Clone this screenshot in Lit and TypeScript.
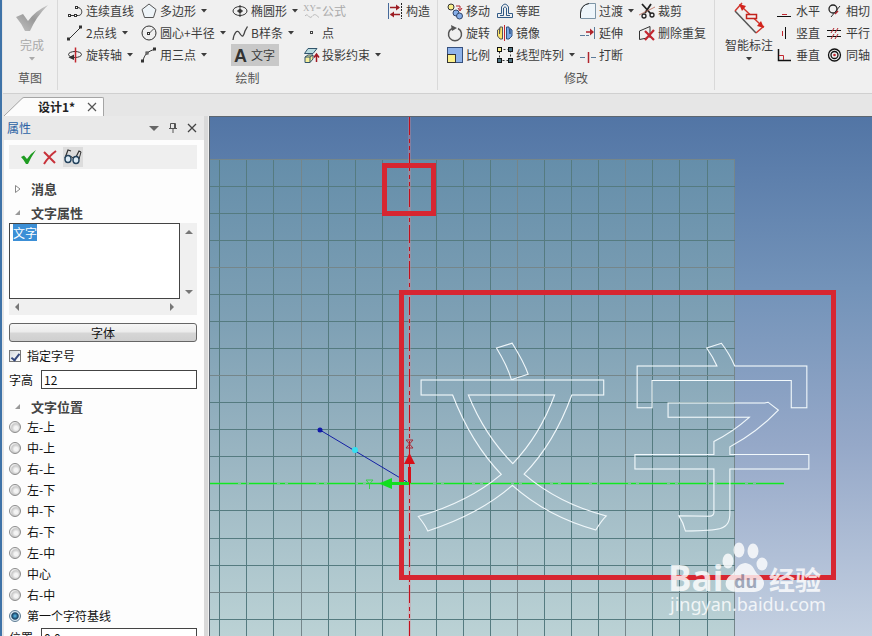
import { LitElement, html, css, svg, nothing } from "lit";
import { customElement, query, state } from "lit/decorators.js";
import { classMap } from "lit/directives/class-map.js";

const FONT = css`"Noto Sans CJK SC", "Noto Sans", sans-serif`;

const handle = (x: number, y: number) =>
  svg`<rect x="${x}" y="${y}" width="2" height="2" fill="#fff" stroke="#333" stroke-width="1"/>`;

const icons: Record<string, unknown> = {
  polyline: svg`<path d="M3.500 12.500H11.500C16 12.500 16 4.500 10.500 4.500H9" fill="none" stroke="#333"/>
    ${handle(1.5, 11.5)}${handle(7.5, 11.5)}${handle(8.5, 3.5)}`,
  line: svg`<path d="M2.500 13.500L13.500 2.500" stroke="#333"/>${handle(0.5, 13)}${handle(12.5, 1)}`,
  axis: svg`<ellipse cx="8" cy="7.500" rx="6.500" ry="3" fill="none" stroke="#333"/>
    <path d="M8.500 0.500V15.500" stroke="#c3272f" stroke-width="1.500"/><path d="M7 7.500L1.500 10.500L7 13Z" fill="#333"/>`,
  polygon: svg`<path d="M8 1L15 6.500L12.500 14.500H3.500L1 6.500Z" fill="#eef4f8" stroke="#555"/>`,
  circle: svg`<circle cx="8" cy="8" r="7" fill="none" stroke="#333"/>
    <path d="M8 8.500L12.500 4" stroke="#555"/>${handle(6.5, 7.5)}`,
  arc: svg`<path d="M2 14C3 8 7 4 13.500 2.500" fill="none" stroke="#333"/>
    ${handle(0.5, 13)}${handle(5, 5)}${handle(12.5, 1)}`,
  ellipse: svg`<ellipse cx="8" cy="8" rx="7" ry="4.500" fill="none" stroke="#333"/>
    <path d="M8 2V14M5 8H11" stroke="#333"/><circle cx="8" cy="8" r="2" fill="#333"/>`,
  spline: svg`<path d="M1 15C2 8 5 4 7.500 8S11 13 13 6L15.500 1.500" fill="none" stroke="#444" stroke-width="1.300"/>`,
  text: svg`<text class="letter" x="2" y="15">A</text>`,
  formula: svg`<text class="xy" x="0" y="8">XY=</text>
    <path d="M2 13C5 9 6 17 9 13.500S13 12 16 14.500" fill="none" stroke="#bbb"/>`,
  point: svg`<rect x="7.500" y="6.500" width="2" height="2" fill="#fff" stroke="#444"/>`,
  project: svg`<path d="M5 1.500H14L10 6.500H1.500Z" fill="#b9dbe0" stroke="#31546b"/>
    <path d="M2 10L5 8H10V12L7 15.500H2Z" fill="#f7ef9a" stroke="#31546b"/><path d="M2 10H7V15.500M7 10L10 8" fill="none" stroke="#31546b"/>
    <path d="M13.500 15V8M11 10.500L13.500 7L16 10.500" fill="none" stroke="#a01822" stroke-width="1.500"/>`,
  construct: svg`<path d="M1.500 0V16" stroke="#45699a"/><path d="M14.500 0V16" stroke="#222" stroke-dasharray="2 1"/>
    <path d="M3 4.500H12M3.500 11.500H13" stroke="#9c1c22" stroke-width="1.500"/>
    <path d="M9 1.500L13 4.500L9 7.500ZM7 8.500L3 11.500L7 14.500Z" fill="#9c1c22"/>`,
  move: svg`<circle cx="4" cy="4" r="3" fill="#fbf08b" stroke="#333"/><circle cx="9" cy="10" r="3" fill="#86aee8" stroke="#31466b"/>
    <circle cx="12.500" cy="13" r="3" fill="#86aee8" stroke="#31466b"/><path d="M9 3H13V7M11 5L13 8L15 5" fill="none" stroke="#b3262c"/>`,
  rotate: svg`<path d="M5 3.500A6.500 6.500 0 1 0 11 3.500" fill="none" stroke="#555" stroke-width="1.500"/><path d="M4 0L10 3L5 6Z" fill="#555"/>`,
  scale: svg`<rect x="0.500" y="0.500" width="15" height="15" fill="#8fb3ea" stroke="#35507e"/><rect x="0.500" y="7.500" width="8" height="8" fill="#fbf08b" stroke="#333"/>`,
  offset: svg`<path d="M0.500 14.500V10.500H4.500V4Q8 -2 11.500 4V10.500H15.500V14.500ZM3 12.500H6.500V5Q8 2.500 9.500 5V12.500H13" fill="none" stroke="#315a86"/>`,
  mirror: svg`<path d="M7.500 0V16" stroke="#c3272f"/><path d="M0.500 5L2.500 3.500V9L3 2H5.500V14H3L0.500 11Z" fill="#fbe46c" stroke="#555"/>
    <path d="M15 5L13 3.500V9L12 2H9.500V14H12L15 11Z" fill="#78a7e6" stroke="#31507e"/>`,
  pattern: svg`<path d="M2.500 2.500H13.500V13.500H2.500Z" fill="none" stroke="#333" stroke-dasharray="2 2"/>
    <rect x="0.500" y="0.500" width="4" height="4" fill="#fbf08b" stroke="#111"/>
    <g fill="#4f7583" stroke="#111"><rect x="11.500" y="0.500" width="4" height="4"/><rect x="0.500" y="11.500" width="4" height="4"/><rect x="11.500" y="11.500" width="4" height="4"/></g>`,
  fillet: svg`<path d="M1 15.500V9Q2 2 9 0.500H15.500V15.500Z" fill="#eef5fa"/><path d="M0.500 15.500V10Q1 2 9 0.500H15.500V15.500H1" fill="none" stroke="#7d95a6"/>
    <path d="M0.500 15V10Q1 2 9 0.500" fill="none" stroke="#333"/>`,
  extend: svg`<path d="M0 10.500H5M6 10.500H9" stroke="#5b7b9a"/><path d="M14.500 2V14" stroke="#5b7b9a"/>
    <path d="M6 7H12" stroke="#b0242c" stroke-width="1.500"/><path d="M10 3.500L14 7L10 10.500Z" fill="#b0242c"/>`,
  break: svg`<path d="M0 10.500H5M11 10.500H16" stroke="#5b7b9a"/><path d="M8.500 5V16" stroke="#b0242c" stroke-width="1.500"/>`,
  trim: svg`<path d="M3 1L12 11M12 1L6 10" stroke="#222" stroke-width="1.800"/><path d="M0 12L16 4" stroke="#b86452" stroke-width="0.800"/>
    <circle cx="5" cy="13" r="2" fill="none" stroke="#222" stroke-width="1.300"/><circle cx="13" cy="12" r="2" fill="none" stroke="#222" stroke-width="1.300"/>`,
  dedupe: svg`<path d="M0.500 14.500V6L11 1.500V13M0.500 14.500L8 13" fill="none" stroke="#333"/><path d="M6 6L15 15M15 5L6 15" stroke="#c22730" stroke-width="2.200"/>`,
  horizontal: svg`<path d="M0 13.500H14" stroke="#111"/><path d="M5 11.500H10" stroke="#c3272f"/>`,
  vertical: svg`<path d="M8.500 2V14" stroke="#111"/><path d="M5.500 6V11" stroke="#c3272f"/>`,
  perpendicular: svg`<path d="M1.500 2V13.500H14" fill="none" stroke="#111" stroke-width="1.500"/><path d="M2 8.500H6.500V13" fill="none" stroke="#c3272f"/>`,
  tangent: svg`<circle cx="6" cy="6" r="4" fill="none" stroke="#222" stroke-width="1.300"/><path d="M4 14L13 3" stroke="#333"/><path d="M8 11L11 8" stroke="#b0242c" stroke-width="1.500"/>`,
  parallel: svg`<path d="M0 5.500H14M0 11.500H14" stroke="#111"/><path d="M4 8L7 3M8 8L11 3M4 14L7 9M8 14L11 9" stroke="#b0242c"/>`,
  concentric: svg`<circle cx="7.500" cy="8" r="6" fill="none" stroke="#111" stroke-width="1.300"/><circle cx="7.500" cy="8" r="3.500" fill="none" stroke="#111" stroke-width="1.300"/><circle cx="7.500" cy="8" r="1.300" fill="#c3272f"/>`,
};

interface Command {
  icon: string;
  label: string;
  menu?: boolean;
  disabled?: boolean;
  active?: boolean;
}

const drawColumns: Command[][] = [
  [
    { icon: "polyline", label: "连续直线" },
    { icon: "line", label: "2点线", menu: true },
    { icon: "axis", label: "旋转轴", menu: true },
  ],
  [
    { icon: "polygon", label: "多边形", menu: true },
    { icon: "circle", label: "圆心+半径", menu: true },
    { icon: "arc", label: "用三点", menu: true },
  ],
  [
    { icon: "ellipse", label: "椭圆形", menu: true },
    { icon: "spline", label: "B样条", menu: true },
    { icon: "text", label: "文字", active: true },
  ],
  [
    { icon: "formula", label: "公式", disabled: true },
    { icon: "point", label: "点" },
    { icon: "project", label: "投影约束", menu: true },
  ],
  [{ icon: "construct", label: "构造" }],
];

const modifyColumns: Command[][] = [
  [
    { icon: "move", label: "移动" },
    { icon: "rotate", label: "旋转" },
    { icon: "scale", label: "比例" },
  ],
  [
    { icon: "offset", label: "等距" },
    { icon: "mirror", label: "镜像" },
    { icon: "pattern", label: "线型阵列", menu: true },
  ],
  [
    { icon: "fillet", label: "过渡", menu: true },
    { icon: "extend", label: "延伸" },
    { icon: "break", label: "打断" },
  ],
  [
    { icon: "trim", label: "裁剪" },
    { icon: "dedupe", label: "删除重复" },
  ],
];

const constraintColumns: Command[][] = [
  [
    { icon: "horizontal", label: "水平" },
    { icon: "vertical", label: "竖直" },
    { icon: "perpendicular", label: "垂直" },
  ],
  [
    { icon: "tangent", label: "相切" },
    { icon: "parallel", label: "平行" },
    { icon: "concentric", label: "同轴" },
  ],
];

const caret = html`<svg class="caret" width="6" height="4" viewBox="0 0 6 4" aria-hidden="true"><path d="M0 0H6L3 3.500Z" fill="currentColor"/></svg>`;

@customElement("cad-ribbon")
class CadRibbon extends LitElement {
  static styles = css`
    :host { display: block; }
    .ribbon { display: flex; height: 93px; background: #f0f0f0; border-bottom: 1px solid #d0d0d0; overflow: hidden; }
    .group { display: flex; flex-direction: column; flex: none; border-right: 1px solid #d9d9d9; margin-bottom: 3px; }
    .group.last { flex: 1; border-right: 0; }
    .tools { display: grid; height: 69px; padding-left: 8px; }
    .sketch { width: 54px; }
    .sketch .tools { display: flex; justify-content: center; padding-left: 4px; }
    .draw { width: 379px; }
    .draw .tools { grid-template-columns: 74px 91px 71px 84px 50px; }
    .modify { width: 276px; }
    .modify .tools { grid-template-columns: 50px 83px 59px 74px; }
    .last .tools { grid-template-columns: 54px 50px 50px; padding-left: 7px; }
    .caption { text-align: center; line-height: 24px; color: #555; }
    .col { display: flex; flex-direction: column; align-items: flex-start; }
    button { font: 12px/16px ${FONT}; color: #3c3c3c; background: none; border: 0; padding: 0; margin: 0; white-space: nowrap; }
    .cmd { display: flex; align-items: center; height: 22px; padding: 0 4px 0 1px; gap: 3px; }
    .cmd.active { background: #c8c8c8; }
    .cmd .caret { margin-left: 2px; }
    .cmd svg { flex: none; overflow: visible; }
    .letter { font: 700 18px "Liberation Sans", sans-serif; fill: #333; }
    .xy { font: 9px "Liberation Serif", serif; fill: #aaa; }
    button:disabled { color: #aaa; }
    .big { display: flex; flex-direction: column; align-items: center; height: 66px; }
    .big svg { flex: none; }
    .big .caret { margin-top: 4px; }
  `;

  private column(commands: Command[]) {
    return html`<div class="col">
      ${commands.map(
        (c) => html`<button class=${classMap({ cmd: true, active: !!c.active })} ?disabled=${!!c.disabled}>
          <svg width="16" height="16" viewBox="0 0 16 16" aria-hidden="true">${icons[c.icon]}</svg>
          <span>${c.label}</span>${c.menu ? caret : nothing}
        </button>`
      )}
    </div>`;
  }

  render() {
    return html`<div class="ribbon" role="toolbar">
      <div class="group sketch">
        <div class="tools">
          <button class="big" disabled>
            <svg width="34" height="37" viewBox="0 0 34 37" aria-hidden="true">
              <defs><linearGradient id="tick" x1="0" y1="1" x2="1" y2="0"><stop offset="0" stop-color="#c4c4c4"/><stop offset="0.500" stop-color="#999"/><stop offset="1" stop-color="#c8c8c8"/></linearGradient></defs>
              <path d="M1 17L8 14L13 21Q20 11 33 5Q21 17 15 31H10Q7 24 1 17Z" fill="url(#tick)"/>
            </svg>
            <span>完成</span>${caret}
          </button>
        </div>
        <div class="caption">草图</div>
      </div>
      <div class="group draw">
        <div class="tools">${drawColumns.map((c) => this.column(c))}</div>
        <div class="caption">绘制</div>
      </div>
      <div class="group modify">
        <div class="tools">${modifyColumns.map((c) => this.column(c))}</div>
        <div class="caption">修改</div>
      </div>
      <div class="group last">
        <div class="tools">
          <button class="big">
            <svg width="34" height="37" viewBox="0 0 34 37" aria-hidden="true">
              <path d="M3 11L24 33" stroke="#555" stroke-width="1.500"/>
              <path d="M3 11L10 3M24 33L32 26" stroke="#d2382f" stroke-width="1.500"/>
              <path d="M10 7L30 26" stroke="#d2382f" stroke-width="1.500"/>
              <path d="M7 4L14 6L10 11ZM32 28L25 26L29 21Z" fill="#d2231c"/>
              <rect x="14.500" y="14.500" width="10" height="4" fill="#f5eeee" stroke="#c2231c" stroke-width="1.500"/>
            </svg>
            <span>智能标注</span>${caret}
          </button>
          ${constraintColumns.map((c) => this.column(c))}
        </div>
      </div>
    </div>`;
  }
}

const anchors = ["左-上", "中-上", "右-上", "左-下", "中-下", "右-下", "左-中", "中心", "右-中", "第一个字符基线"];

@customElement("property-panel")
class PropertyPanel extends LitElement {
  static styles = css`
    :host { display: block; font: 12px/16px ${FONT}; color: #111; background: #fdfdfd; overflow: hidden; }
    button { font: inherit; color: #555; background: none; border: 0; padding: 0; margin: 0; }
    svg { display: block; }
    .head { display: flex; align-items: center; height: 24px; padding: 0 7px 0 3px; background: #e9e9e9; color: #2b62a4; gap: 9px; }
    .head span { flex: 1; }
    .body { padding: 5px 7px 0 5px; }
    .bar { display: flex; align-items: center; height: 24px; background: #efefef; padding-left: 10px; gap: 4px; margin-bottom: 11px; }
    .bar .on { background: #dcdcdc; }
    .title { display: flex; align-items: center; height: 18px; width: 100%; gap: 8px; padding-left: 4px; font-size: 13px; font-weight: 700; color: #444; }
    .title + .title { margin-top: 6px; }
    .editor { display: grid; grid-template-columns: 1fr 17px; grid-template-rows: 76px 16px; margin: 1px 0 8px; }
    textarea { font: 12px/16px ${FONT}; margin: 0; padding: 1px 3px; border: 1px solid #444; border-radius: 0; background: #fff; color: #111; resize: none; outline: 0; overflow: hidden; }
    textarea::selection { background: #3c8fd6; color: #fff; }
    .vbar { display: flex; flex-direction: column; justify-content: space-between; align-items: center; padding: 6px 0 4px; background: #f0f0f0; }
    .hbar { display: flex; justify-content: space-between; align-items: center; padding: 0 5px; background: #f0f0f0; }
    .corner { background: #f0f0f0; }
    .font { display: block; width: 100%; height: 19px; border: 1px solid #666; border-radius: 3px; background: linear-gradient(#f6f6f6, #ececec 45%, #d6d6d6 55%, #cfcfcf); color: #111; margin-bottom: 5px; }
    .row { display: flex; align-items: center; gap: 6px; height: 18px; margin-bottom: 5px; }
    .field { display: flex; align-items: center; height: 19px; gap: 8px; }
    .field label { flex: none; }
    .field input { flex: 1; min-width: 0; height: 19px; box-sizing: border-box; border: 1px solid #444; border-radius: 0; margin: 0; padding: 0 2px; background: #fff; color: #111; font: 12px/16px ${FONT}; }
    .place { margin-top: 9px; }
    fieldset { border: 0; margin: 0 0 2px; padding: 0; }
    .option { display: flex; align-items: center; gap: 6px; height: 21px; }
    .option input { appearance: none; width: 12px; height: 12px; margin: 0; border: 1px solid #8b8b8b; border-radius: 50%; background: radial-gradient(circle at 60% 60%, #f4f4f4 0 20%, #c9c9c9 50%, #f2f2f2 70%); }
    .option input:checked { border-color: #5d7b93; background: radial-gradient(circle, #4aa3d0 0 10%, #173f60 45%, #d9e8f2 60%); }
    .row input { appearance: none; width: 12px; height: 12px; margin: 0; border: 1px solid #777; background: linear-gradient(135deg, #d5d9de, #fff); display: grid; place-items: center; }
    .row input:checked::before { content: ""; width: 3px; height: 7px; border: solid #34477c; border-width: 0 2px 2px 0; transform: rotate(38deg); }
  `;

  @query("textarea") private editor!: HTMLTextAreaElement;
  @state() private anchor = 9;

  firstUpdated() {
    this.editor.focus({ preventScroll: true });
    this.editor.select();
  }

  render() {
    const open = html`<svg width="10" height="10" viewBox="0 0 10 10" aria-hidden="true"><path d="M7 2V7H2Z" fill="#999"/></svg>`;
    const tri = (d: string) => html`<svg width="8" height="8" viewBox="0 0 8 8" aria-hidden="true"><path d="${d}" fill="#777"/></svg>`;
    return html`
      <div class="head">
        <span>属性</span>
        <button aria-label="菜单"><svg width="10" height="10" viewBox="0 0 10 10"><path d="M0 3H10L5 8Z" fill="#666"/></svg></button>
        <button aria-label="固定"><svg width="10" height="10" viewBox="0 0 10 10"><path d="M2.500 5.500V0.500H7.500V5.500M6.500 0.500V5.500M1 5.500H9M5 5.500V10" fill="none" stroke="#555"/></svg></button>
        <button aria-label="关闭"><svg width="10" height="10" viewBox="0 0 10 10"><path d="M1 1L9 9M9 1L1 9" stroke="#444" stroke-width="1.300"/></svg></button>
      </div>
      <div class="body">
        <div class="bar">
          <button aria-label="确定"><svg width="18" height="18" viewBox="0 0 18 18"><path d="M2 9L5 7.500L8 11Q12 5 17 2Q12 9 9 16H7Q5 12 2 9Z" fill="#1f9c22"/></svg></button>
          <button aria-label="取消"><svg width="18" height="18" viewBox="0 0 18 18"><path d="M3 4L14 15M15 3Q8 8 3 16" fill="none" stroke="#c8323a" stroke-width="2"/></svg></button>
          <button class="on" aria-label="预览"><svg width="20" height="20" viewBox="0 0 20 20"><path d="M2 11L5 3L8 4M12 12L16 4L18 5" fill="none" stroke="#333" stroke-width="1.200"/><ellipse cx="5" cy="12" rx="3" ry="3.500" fill="#dcebf5" stroke="#24425c" stroke-width="1.500"/><ellipse cx="13" cy="13" rx="3" ry="3.500" fill="#dcebf5" stroke="#24425c" stroke-width="1.500"/><path d="M8 10Q9 9 10 11M16 12L18 5" fill="none" stroke="#333"/></svg></button>
        </div>
        <button class="title"><svg width="10" height="10" viewBox="0 0 10 10" aria-hidden="true"><path d="M2.500 1.500L7 5L2.500 8.500Z" fill="#fff" stroke="#888"/></svg>消息</button>
        <button class="title" aria-expanded="true">${open}文字属性</button>
        <div class="editor">
          <textarea aria-label="文字" .value=${"文字"}></textarea>
          <div class="vbar">${tri("M0 5H8L4 1Z")}${tri("M0 3H8L4 7Z")}</div>
          <div class="hbar">${tri("M5 0V8L1 4Z")}${tri("M3 0V8L7 4Z")}</div>
          <div class="corner"></div>
        </div>
        <button class="font">字体</button>
        <div class="row"><input id="fixed" type="checkbox" checked /><label for="fixed">指定字号</label></div>
        <div class="field"><label for="height">字高</label><input id="height" value="12" /></div>
        <button class="title place" aria-expanded="true">${open}文字位置</button>
        <fieldset aria-label="文字位置">
          ${anchors.map(
            (name, i) => html`<label class="option"><input type="radio" name="anchor" .checked=${this.anchor === i} @change=${() => (this.anchor = i)} />${name}</label>`
          )}
        </fieldset>
        <div class="field"><label for="pos">位置</label><input id="pos" value="0,0" /></div>
      </div>
    `;
  }
}

const AXIS_X = 199;
const AXIS_Y = 366;
const gridX = Array.from({ length: 20 }, (_, i) => 9 + 27 * i + (i > 2 ? 1 : 0) + (i > 17 ? 1 : 0));
const gridY = Array.from({ length: 18 }, (_, i) => 42 + 27 * i + (i > 13 ? 1 : 0));

@customElement("sketch-view")
class SketchView extends LitElement {
  static styles = css`
    :host { display: block; background: linear-gradient(#5275a5, #7393b9 33%, #95a8c8 63%, #c4d0e1); border: solid #5d6670; border-width: 1px 0 0 1px; overflow: hidden; }
    .scene { display: block; width: 100%; height: 100%; min-height: 519px; }
    .glyphs { font: 400 202px ${FONT}; fill: none; stroke: #f2f9fc; stroke-width: 1px; }
    .brand { font: 700 35px "Open Sans", sans-serif; fill: #fff; }
    .du { font: 700 18px "Open Sans", sans-serif; fill: #9aa3b4; }
    .cn { font: 700 26px ${FONT}; fill: #fff; }
    .site { font: 18px "Noto Sans", sans-serif; fill: #fff; }
  `;

  render() {
    return html`<svg class="scene" role="img" aria-label="草图">
      <defs>
        <linearGradient id="plane" x1="0" y1="42" x2="0" y2="519" gradientUnits="userSpaceOnUse">
          <stop offset="0" stop-color="#658eaa"/><stop offset="0.350" stop-color="#7fa1b5"/>
          <stop offset="0.650" stop-color="#9cb7c3"/><stop offset="1" stop-color="#bbd2d5"/>
        </linearGradient>
      </defs>
      <rect x="0" y="42" width="525" height="600" fill="url(#plane)"/>
      ${gridX.map((x, i) =>
        Math.abs(x - AXIS_X) < 2 ? nothing : svg`<path d="M${x + 0.5} 42V640" stroke="${i % 4 === 3 ? "#75868a" : "#557b80"}"/>`
      )}
      ${gridY.map((y, i) =>
        y === AXIS_Y ? nothing : svg`<path d="M0 ${y + 0.5}H525" stroke="${i % 4 === 0 ? "#75868a" : "#557b80"}"/>`
      )}
      <path d="M0 366.500H574" stroke="#3fe04c" stroke-width="3" stroke-opacity="0.350"/>
      <path d="M0 366.500H574" stroke="#10e822" stroke-dasharray="28 3 5 3"/>
      <path d="M199.500 0V640" stroke="#d98a94" stroke-width="3" stroke-opacity="0.350"/>
      <path d="M199.500 0V640" stroke="#c20f1c" stroke-dasharray="18 4 4 3 4 3"/>
      <path d="M110 313L197 365" stroke="#1420a4"/>
      <circle cx="110" cy="313" r="2.500" fill="#1018a8"/><circle cx="145" cy="333" r="3" fill="#35dff0"/>
      <text class="glyphs" x="201" y="398">文</text>
      <text class="glyphs" x="411" y="398">字</text>
      <rect x="174.500" y="48.500" width="49" height="48" fill="none" stroke="#d72631" stroke-width="5"/>
      <rect x="191.500" y="175.500" width="432" height="285" fill="none" stroke="#d72631" stroke-width="5"/>
      <path d="M199.500 366V350" stroke="#d80f18" stroke-width="3"/><path d="M194 347L199.500 336L205 347Z" fill="#d80f18"/>
      <path d="M196 323H203L196 331H203Z" fill="none" stroke="#a62a36"/>
      <path d="M199 366.500H178" stroke="#12df1f" stroke-width="3"/><path d="M182 361L169 366.500L182 372Z" fill="#12df1f"/>
      <path d="M156 363H163L159.500 367V372M156 363L159.500 367" fill="none" stroke="#3ccf4c"/>
      <g opacity="0.800">
        <text class="brand" x="458" y="474">Bai</text>
        <g fill="#fff">
          <ellipse cx="518" cy="444" rx="5.500" ry="7.500"/><ellipse cx="529" cy="433" rx="5.500" ry="7.500"/>
          <ellipse cx="543" cy="434" rx="5.500" ry="7.500"/><ellipse cx="552" cy="447" rx="5.500" ry="6.500"/>
          <path d="M535 446C545 447 543 454 549 458C558 464 554 475 544 475H527C513 475 513 463 521 458C527 454 526 447 535 446Z"/>
        </g>
        <text class="du" x="524" y="471">du</text>
        <text class="cn" x="559" y="473">经验</text>
        <text class="site" x="460" y="494">jingyan.baidu.com</text>
      </g>
    </svg>`;
  }
}

@customElement("app-root")
class AppRoot extends LitElement {
  static styles = css`
    :host { display: block; font: 12px/16px ${FONT}; }
    .window { display: flex; flex-direction: column; height: 100vh; box-sizing: border-box; border-left: 2px solid #3f73a8; padding-left: 2px; background: #e6e6e6; overflow: hidden; }
    .ribbon { margin-left: -1px; }
    .tabs { display: flex; align-items: flex-end; height: 22px; flex: none; }
    .tab { display: flex; height: 19px; color: #222; }
    .tab svg { display: block; flex: none; }
    .face { display: flex; align-items: center; gap: 12px; padding: 0 6px 0 14px; background: #fcfcfc; border: solid #a5a5a5; border-width: 1px 1px 0 0; border-radius: 0 2px 0 0; }
    button { font: inherit; color: inherit; background: none; border: 0; padding: 0; }
    .name { font-weight: 700; }
    .main { display: grid; grid-template-columns: 200px 5px minmax(0, 1fr); flex: 1; min-height: 0; }
    .split { background: #d9d9d9; border-right: 1px solid #efefef; }
  `;

  render() {
    return html`<div class="window">
      <cad-ribbon class="ribbon"></cad-ribbon>
      <div class="tabs">
        <div class="tab">
          <svg width="20" height="19" viewBox="0 0 20 19" aria-hidden="true"><path d="M0 19L20 0V19Z" fill="#fcfcfc"/><path d="M0 19L18 1.500Q19 0.500 20 0.500" fill="none" stroke="#a5a5a5"/></svg>
          <div class="face">
            <button class="name">设计1*</button>
            <button aria-label="关闭"><svg width="10" height="10" viewBox="0 0 10 10"><path d="M1 1L9 9M9 1L1 9" stroke="#555" stroke-width="1.200"/></svg></button>
          </div>
        </div>
      </div>
      <div class="main">
        <property-panel></property-panel>
        <div class="split"></div>
        <sketch-view></sketch-view>
      </div>
    </div>`;
  }
}
